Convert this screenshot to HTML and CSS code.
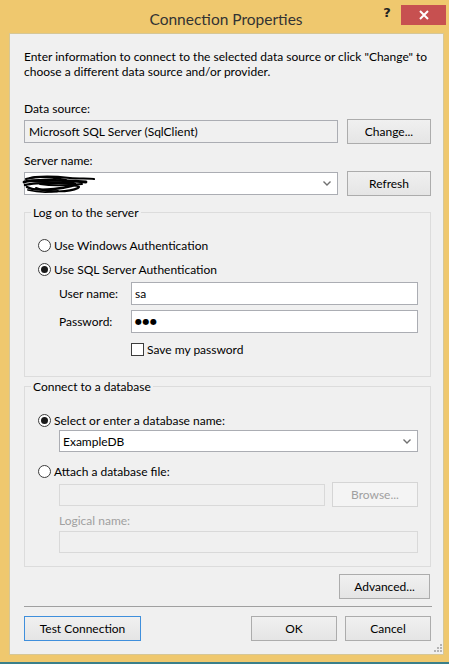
FILE: index.html
```html
<!DOCTYPE html>
<html lang="en">
<head>
    <meta charset="UTF-8">
    <meta name="viewport" content="width=device-width, initial-scale=1.0">
    <title>Connection Properties</title>
    <link rel="stylesheet" href="styles.css">
</head>
<body>
    <div class="window">
        <div class="titlebar">
            <span class="title">Connection Properties</span>
            <span class="help">?</span>
            <span class="close">
                <svg width="10" height="10" viewBox="0 0 10 10"><path d="M1 1 L9 9 M9 1 L1 9" stroke="#fff" stroke-width="2"/></svg>
            </span>
        </div>

        <div class="client">
            <p class="intro">Enter information to connect to the selected data source or click "Change" to<br>choose a different data source and/or provider.</p>

            <div class="label first">Data source:</div>
            <div class="row row-source">
                <div class="textbox readonly">Microsoft SQL Server (SqlClient)</div>
                <button class="btn">Change...</button>
            </div>

            <div class="label server-label">Server name:</div>
            <div class="row row-server">
                <div class="combo">
                    <!-- server name scribbled out -->
                    <svg class="scribble" width="76" height="22" viewBox="0 0 76 22">
                        <g fill="none" stroke="#000" stroke-linecap="round">
                            <path d="M4 6 C 14 3, 30 3, 48 5 C 58 6, 66 5, 72 6" stroke-width="2.2"/>
                            <path d="M2 9 C 12 6, 36 7, 64 9" stroke-width="2.8"/>
                            <path d="M3 12 C 14 9, 34 10, 50 10 C 60 11, 44 15, 32 16 C 22 17, 10 17, 5 14" stroke-width="2.4"/>
                            <path d="M8 5 C 18 3, 34 5, 44 7" stroke-width="2"/>
                            <path d="M14 15 C 26 20, 48 19, 56 15 C 60 13, 52 12, 44 13" stroke-width="2"/>
                            <path d="M6 17 C 14 19, 24 20, 36 18" stroke-width="1.8"/>
                            <path d="M18 11 C 30 13, 40 13, 60 11" stroke-width="2"/>
                            <path d="M10 8 C 20 9, 34 9, 40 10" stroke-width="2"/>
                        </g>
                    </svg>
                    <span class="value"></span>
                    <svg class="arrow" width="8" height="5" viewBox="0 0 8 5"><path d="M0.5 0.5 L4 4 L7.5 0.5" fill="none" stroke="#707070" stroke-width="1.4"/></svg>
                </div>
                <button class="btn">Refresh</button>
            </div>

            <fieldset class="group group-logon">
                <legend>Log on to the server</legend>
                <label class="radio-row"><span class="radio"></span>Use Windows Authentication</label>
                <label class="radio-row"><span class="radio checked"></span>Use SQL Server Authentication</label>
                <div class="creds">
                    <span class="cred-label">User name:</span>
                    <div class="textbox">sa</div>
                    <span class="cred-label">Password:</span>
                    <div class="textbox"><span class="mask">●●●</span></div>
                </div>
                <label class="check-row"><span class="checkbox"></span>Save my password</label>
            </fieldset>

            <fieldset class="group group-db">
                <legend>Connect to a database</legend>
                <label class="radio-row short"><span class="radio checked"></span>Select or enter a database name:</label>
                <div class="combo indent">
                    <span class="value">ExampleDB</span>
                    <svg class="arrow" width="8" height="5" viewBox="0 0 8 5"><path d="M0.5 0.5 L4 4 L7.5 0.5" fill="none" stroke="#707070" stroke-width="1.4"/></svg>
                </div>
                <label class="radio-row short attach"><span class="radio"></span>Attach a database file:</label>
                <div class="row indent row-file">
                    <div class="textbox disabled"></div>
                    <button class="btn btn-browse" disabled>Browse...</button>
                </div>
                <div class="label disabled-text indent logical">Logical name:</div>
                <div class="textbox disabled indent logical-box"></div>
            </fieldset>

            <div class="advanced-row">
                <button class="btn btn-advanced">Advanced...</button>
            </div>

            <div class="separator"></div>

            <div class="footer">
                <button class="btn btn-test">Test Connection</button>
                <div class="footer-right">
                    <button class="btn">OK</button>
                    <button class="btn">Cancel</button>
                </div>
            </div>

            <svg class="grip" width="9" height="9" viewBox="0 0 9 9">
                <g fill="#b4b4b4">
                    <rect x="7" y="0" width="2" height="2"/>
                    <rect x="4" y="3" width="2" height="2"/>
                    <rect x="7" y="3" width="2" height="2"/>
                    <rect x="1" y="6" width="2" height="2"/>
                    <rect x="4" y="6" width="2" height="2"/>
                    <rect x="7" y="6" width="2" height="2"/>
                </g>
            </svg>
        </div>
    </div>
</body>
</html>
```

FILE: styles.css
```css
body {
    margin: 0;
    padding: 0;
    background-color: #ffffff;
    font-family: Lato, "Noto Sans", sans-serif;
    font-size: 12px;
    color: #000;
}
.window {
    width: 449px;
    height: 664px;
    background-color: #efc86e;
    border-bottom: 2px solid #3a7f8a;
    box-sizing: border-box;
    display: flex;
    flex-direction: column;
}
.titlebar {
    height: 33px;
    display: flex;
    align-items: flex-start;
    flex-shrink: 0;
}
.title {
    flex: 1;
    padding-left: 79px;
    text-align: center;
    font-size: 15.5px;
    line-height: 20px;
    padding-top: 9px;
    color: #333;
}
.help {
    width: 28px;
    text-align: center;
    font-family: "DejaVu Sans", sans-serif;
    font-weight: bold;
    font-size: 13px;
    line-height: 16px;
    padding-top: 5px;
    color: #222;
}
.close {
    width: 45px;
    height: 20px;
    margin-top: 5px;
    margin-right: 3px;
    background-color: #c75050;
    display: flex;
    align-items: center;
    justify-content: center;
}
.client {
    position: relative;
    margin: 0 5px 0 9px;
    height: 622px;
    flex-shrink: 0;
    box-sizing: border-box;
    background-color: #f0f0f0;
    border: 1px solid #d6c796;
    padding: 15px 12px 0 14px;
    line-height: 15px;
}
.intro {
    margin: 0;
    white-space: nowrap;
}
.label {
    margin-top: 10px;
}
.label.first {
    margin-top: 22px;
}
.label.server-label {
    margin-top: 9px;
}
.row {
    display: flex;
    align-items: center;
    gap: 9px;
    margin-top: 2px;
}
.row-source {
    margin-top: 3px;
}
.row-server {
    margin-top: 3px;
}
.textbox {
    flex: 1;
    height: 23px;
    box-sizing: border-box;
    background-color: #fff;
    border: 1px solid #abadb3;
    padding: 0 3px;
    line-height: 21px;
    white-space: nowrap;
}
.textbox.readonly {
    background-color: #f0f0f0;
    padding-left: 4px;
}
.textbox.disabled {
    background-color: #f0f0f0;
    border-color: #d9d9d9;
    height: 22px;
}
.btn {
    width: 84px;
    height: 25px;
    box-sizing: border-box;
    font-family: inherit;
    font-size: 12px;
    color: #000;
    background: linear-gradient(#f0f0f0, #e5e5e5);
    border: 1px solid #acacac;
    padding: 0;
}
.btn:disabled {
    color: #a0a0a0;
    background: #f4f4f4;
    border-color: #d5d5d5;
}
.combo {
    position: relative;
    flex: 1;
    height: 23px;
    box-sizing: border-box;
    background-color: #fff;
    border: 1px solid #abadb3;
    display: flex;
    align-items: center;
    padding: 0 6px 0 3px;
}
.combo .value {
    flex: 1;
    line-height: 21px;
}
.scribble {
    position: absolute;
    left: -3px;
    top: 0;
}
.group {
    margin: 9px 0 0 0;
    padding: 13px 12px 18px 13px;
    border: 1px solid #dcdcdc;
    min-width: 0;
}
.group legend {
    padding: 0 2px;
    margin-left: -7px;
    line-height: 15px;
}
.radio-row {
    display: flex;
    align-items: center;
    height: 24px;
}
.radio-row.short {
    height: 20px;
}
.radio {
    width: 13px;
    height: 13px;
    box-sizing: border-box;
    border: 1px solid #3c3c3c;
    border-radius: 50%;
    background-color: #fff;
    margin-right: 3px;
    display: flex;
    align-items: center;
    justify-content: center;
}
.radio.checked::after {
    content: "";
    width: 7px;
    height: 7px;
    border-radius: 50%;
    background-color: #1a1a1a;
}
.creds {
    display: grid;
    grid-template-columns: 72px 1fr;
    row-gap: 5px;
    align-items: center;
    margin: 1px 0 0 21px;
}
.mask {
    font-family: "DejaVu Sans", sans-serif;
    font-size: 8px;
    letter-spacing: 0.5px;
    vertical-align: top;
}
.check-row {
    display: flex;
    align-items: center;
    height: 18px;
    margin: 7px 0 0 93px;
}
.checkbox {
    width: 13px;
    height: 13px;
    box-sizing: border-box;
    border: 1px solid #3c3c3c;
    background-color: #fff;
    margin-right: 3px;
}
.group-db {
    margin-top: 2px;
    padding-top: 16px;
    padding-bottom: 13px;
}
.indent {
    margin-left: 21px;
}
.group-db .combo {
    height: 22px;
}
.attach {
    margin-top: 9px;
}
.row-file {
    margin-top: 1px;
    gap: 7px;
}
.btn-browse {
    width: 86px;
}
.disabled-text {
    color: #a0a0a0;
}
.logical {
    margin-top: 6px;
}
.logical-box {
    margin-top: 3px;
}
.advanced-row {
    display: flex;
    justify-content: flex-end;
    margin-top: 7px;
    padding-right: 1px;
}
.btn-advanced {
    width: 91px;
}
.separator {
    height: 1px;
    background-color: #a0a0a0;
    margin-top: 7px;
    margin-right: -1px;
}
.footer {
    display: flex;
    justify-content: space-between;
    margin-top: 9px;
}
.btn-test {
    width: 117px;
    border-color: #3f8fdc;
}
.footer-right {
    display: flex;
    gap: 8px;
}
.footer-right .btn {
    width: 86px;
}
.grip {
    position: absolute;
    right: 1px;
    bottom: 1px;
}
```
